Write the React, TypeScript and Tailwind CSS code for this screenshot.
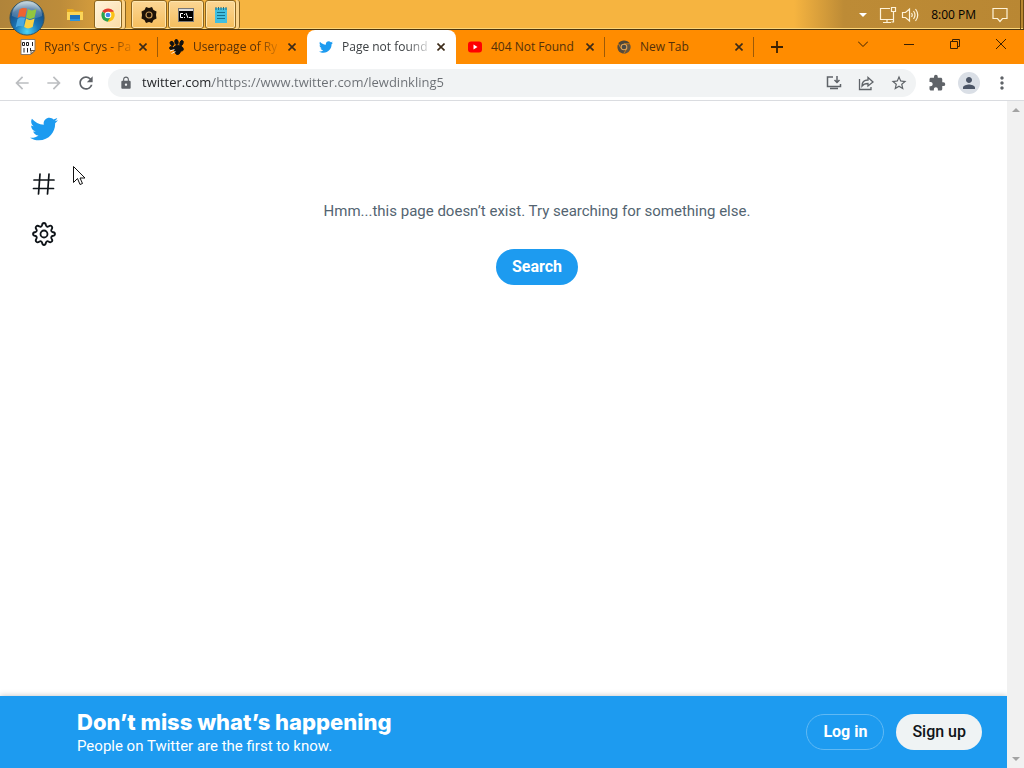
import React, { useState } from 'react';
import { FaTwitter } from 'react-icons/fa';
import { MdArrowBack, MdArrowForward, MdExtension, MdLock, MdMoreVert, MdPerson, MdRefresh, MdStarBorder } from 'react-icons/md';

interface Tab {
  title: string;
  icon: React.ReactNode;
  faded?: boolean;
}

function StartOrb() {
  return (
    <svg viewBox="0 0 38 38" className="h-9 w-9">
      <defs>
        <radialGradient id="orb" cx="50%" cy="90%" r="85%">
          <stop offset="0" stopColor="#4fd6f5" />
          <stop offset="0.4" stopColor="#1b77b8" />
          <stop offset="0.8" stopColor="#164f86" />
          <stop offset="1" stopColor="#6d98ae" />
        </radialGradient>
        <linearGradient id="gloss" x1="0" y1="0" x2="0" y2="1">
          <stop offset="0" stopColor="#fff" stopOpacity="0.6" />
          <stop offset="1" stopColor="#fff" stopOpacity="0.1" />
        </linearGradient>
      </defs>
      <circle cx="19" cy="19" r="18" fill="url(#orb)" stroke="#31505f" />
      <path d="M3 17a16 16 0 0 1 32 0c-8 4-24 4-32 0z" fill="url(#gloss)" />
      <path d="M11 10c3-2 5-2 8-1l-2 9c-3-1-5-1-8 1z" fill="#ee6330" />
      <path d="M20 9.500c3 2 5 2 9 0l-2 9c-4 2-6 2-9 0z" fill="#91c63f" />
      <path d="M9 20c3-2 5-2 8-1l-2 9c-3-1-5-1-8 1z" fill="#4aa8e2" />
      <path d="M18 19.500c3 2 5 2 9 0l-2 9c-4 2-6 2-9 0z" fill="#fbd043" />
    </svg>
  );
}

function ExplorerIcon() {
  return (
    <svg viewBox="0 0 16 16" className="h-4 w-4">
      <path d="M0 2h6l2 2h8v4H0z" fill="#e8ab22" />
      <path d="M0 5h16v8H0z" fill="#fbd558" />
      <path d="M3 8h10v6H3z" fill="#1e72bd" />
      <path d="M3 12h10v2H3z" fill="#2f95dc" />
    </svg>
  );
}

function ChromeIcon({ dark = false }: { dark?: boolean }) {
  return (
    <svg viewBox="0 0 16 16" className="h-[14px] w-[14px]">
      <path d="M8 8 1.500 4.200A7.600 7.600 0 0 1 14.600 4.300z" fill={dark ? '#4d4638' : '#e33b2e'} />
      <path d="M8 8V4.300h6.600A7.600 7.600 0 0 1 7.600 15.600z" fill={dark ? '#635541' : '#fbc116'} />
      <path d="M8 8l3.200 1.800-3.600 5.800A7.600 7.600 0 0 1 1.500 4.200z" fill={dark ? '#554b3c' : '#2aa24c'} />
      {dark && <path d="M8 4.300h6.600M11.200 9.800l-3.600 5.800M4.800 9.800 1.500 4.200" stroke="#ff8c00" strokeWidth="0.800" />}
      <circle cx="8" cy="8" r="3.800" fill={dark ? '#e0a45a' : '#fff'} />
      <circle cx="8" cy="8" r="2.700" fill={dark ? '#4b4a43' : '#4285e8'} />
    </svg>
  );
}

function CogIcon() {
  return (
    <svg viewBox="0 0 16 16" className="h-4 w-4">
      <path d="M5 0l3 1 3-1 1.500 3L15.500 4.500 15 8l.5 3.500-3 1.500L11 16l-3-1-3 1-1.500-3-3-1.500L1 8 .5 4.500l3-1.500z" fill="#1d1308" />
      <circle cx="8" cy="8" r="3" fill="none" stroke="#c99a58" strokeWidth="1.200" />
    </svg>
  );
}

function ConsoleIcon() {
  return (
    <svg viewBox="0 0 16 14" className="h-[14px] w-4">
      <path d="M0 0h16v14H0z" fill="#777" />
      <path d="M1 3h14v10H1z" fill="#000" />
      <path d="M1 1h14v2H1z" fill="#ddd" />
      <path d="M5 5.500H2.500v4H5M6.500 6v1M6.500 9v1M8 5l2 5M11 9.500h3" stroke="#fff" fill="none" />
    </svg>
  );
}

function NotepadIcon() {
  return (
    <svg viewBox="0 0 14 16" className="h-4 w-[14px]">
      <path d="M1 1h12v15H1z" fill="#41bfe0" />
      <path d="M3 5.500h8M3 8.500h8M3 11.500h8" stroke="#16718c" />
      <path d="M2 0v3M4.500 0v3M7 0v3M9.500 0v3M12 0v3" stroke="#2a6f80" />
    </svg>
  );
}

function CodeFileIcon() {
  return (
    <svg viewBox="0 0 16 16" className="h-4 w-4">
      <path d="M1 .5h14v11l-4 4H1z" fill="#fff" stroke="#8a7a66" />
      <path d="M2.500 3.500h2v3h-2zM6.500 3.500h2v3h-2zM12.500 3v4M4 9v4.500M7.500 9v4.500M10.500 9v3" fill="none" stroke="#222" />
      <path d="M11 15v-3.500h4z" fill="#ddd" stroke="#6b5a46" />
    </svg>
  );
}

function PawIcon() {
  return (
    <svg viewBox="0 0 16 16" className="h-4 w-4">
      <g fill="#111" stroke="#111" strokeWidth="0.900">
        <path d="M5 8c2-2.500 7-2.500 9 1 1 2 0 3-2 3-1 1-1 3-3 3.500S6 14 6 12c-2-1-2-3-1-4z" />
        <ellipse cx="2.500" cy="9" rx="2" ry="1.600" />
        <ellipse cx="3" cy="4.500" rx="1.700" ry="2.300" transform="rotate(-35 3 4.500)" />
        <ellipse cx="7.500" cy="3" rx="1.700" ry="2.600" transform="rotate(-10 7.500 3)" />
        <ellipse cx="12.500" cy="4" rx="1.600" ry="2.600" transform="rotate(20 12.500 4)" />
      </g>
      <path d="M1 12l4.500-1.500M2.500 14.500l4-2" stroke="#fff" strokeWidth="0.800" />
    </svg>
  );
}

function YoutubeIcon() {
  return (
    <svg viewBox="0 0 16 16" className="h-4 w-4">
      <rect x="1" y="2.500" width="14" height="11" rx="3" fill="#f00" />
      <path d="M6.500 5.500v5l4-2.500z" fill="#fff" />
    </svg>
  );
}

function CloseGlyph() {
  return (
    <svg viewBox="0 0 8 8" className="h-2 w-2">
      <path d="M.5.5l7 7M7.500.5l-7 7" stroke="currentColor" strokeWidth="1.600" />
    </svg>
  );
}

const tabs: Tab[] = [
  { title: "Ryan's Crys - Pa", icon: <CodeFileIcon />, faded: true },
  { title: 'Userpage of Ry', icon: <PawIcon />, faded: true },
  { title: 'Page not found', icon: <FaTwitter className="h-[14px] w-[14px] text-[#1d9bf0]" />, faded: true },
  { title: '404 Not Found', icon: <YoutubeIcon /> },
  { title: 'New Tab', icon: <ChromeIcon dark /> },
];

const taskButton =
  'flex h-[29px] items-center justify-center rounded-[3px] border border-[#8a6420] bg-linear-to-b from-[#fbd694] to-[#f6be5c] shadow-[inset_0_0_0_1px_#ffe6ae]';

function Taskbar() {
  return (
    <header className="relative z-10 flex h-[30px] items-center border-b border-[#4a3510] bg-[linear-gradient(to_right,#b0843a_0,#bd8c3a_60px,#f6b440_150px,#f6b440_calc(100%-230px),#bd8b36_calc(100%-180px),#b98733_100%)] shadow-[inset_0_-1px_0_#ffd677]">
      <button aria-label="Start" className="ml-[9px] h-[30px] w-9">
        <StartOrb />
      </button>
      <button aria-label="File Explorer" className="ml-[22px] flex h-[29px] w-4 items-center justify-center">
        <ExplorerIcon />
      </button>
      <button aria-label="Google Chrome" className="ml-[11px] flex h-[29px] w-7 items-center justify-center rounded-[3px] border border-[#8a6420] bg-linear-to-br from-[#fff3dc] to-[#fbdca4] shadow-[inset_0_0_0_1px_#fff3d2]">
        <ChromeIcon />
      </button>
      <span className="mr-[5px] h-[29px] w-1 rounded-r-[3px] border-r border-[#8a6420] bg-[#fbd38a]" />
      <div className="flex gap-px">
        <button aria-label="Settings" className={`${taskButton} w-9`}><CogIcon /></button>
        <button aria-label="Command Prompt" className={`${taskButton} w-9`}><ConsoleIcon /></button>
        <button aria-label="Notepad" className={`${taskButton} w-[31px]`}><NotepadIcon /></button>
      </div>
      <span className="h-[29px] w-1 rounded-r-[3px] border-r border-[#8a6420] bg-[#fbd38a]" />
      <div className="ml-auto flex h-full items-center">
        <button aria-label="Show hidden icons">
          <svg viewBox="0 0 8 4" className="h-1 w-2"><path d="M0 0h8L4 4z" fill="#fff" /></svg>
        </button>
        <svg viewBox="0 0 18 18" className="ml-3 h-[18px] w-[18px]" fill="none" stroke="#fff3d8" strokeWidth="1.200">
          <path d="M11 2.500H1.500v11h13V9M4 16.500h8M8 13.500v3M12.500 1.500h4v4h-4zM14.500 5.500V16h-2" />
        </svg>
        <svg viewBox="0 0 18 16" className="ml-1 h-4 w-[18px]" fill="none" stroke="#fff3d8" strokeWidth="1.200">
          <path d="M1.500 5.500v5h3l4 3.500V2l-4 3.500zM10.500 6q1.500 2 0 4M12.500 4q3 4 0 8M14.500 2q4.500 6 0 12" />
        </svg>
        <span className="ml-3 text-[12px]">8:00 PM</span>
        <button aria-label="Notifications" className="ml-4">
          <svg viewBox="0 0 16 16" className="h-4 w-4" fill="none" stroke="#fff3d8" strokeWidth="1.200">
            <path d="M1 1.500h14v10h-4.500L8 14.500l-2.500-3H1z" />
          </svg>
        </button>
        <span className="ml-3 h-full w-1 border-x border-[#6b4a12]" />
      </div>
    </header>
  );
}

function TabStrip({ active, onSelect }: { active: number; onSelect: (index: number) => void }) {
  return (
    <div className="flex h-[34px] bg-[#ff8c00] pl-[9px] text-[#54300a]">
      {tabs.map((tab, index) => (
        <div
          key={tab.title}
          className={`relative flex w-[149px] items-center pl-[11px] ${index === active ? 'rounded-t-lg bg-white text-[#3c4043]' : ''}`}
        >
          <button onClick={() => onSelect(index)} className="flex items-center gap-2 text-left">
            <span className="flex w-4 shrink-0 justify-center">{tab.icon}</span>
            <span className="w-[88px]">
              <span
                className={`block w-fit text-[12px] whitespace-nowrap ${tab.faded ? '[mask-image:linear-gradient(to_right,black_75%,rgba(0,0,0,0.2))]' : ''}`}
              >
                {tab.title}
              </span>
            </span>
          </button>
          <button aria-label="Close tab" className="ml-[3px] flex h-4 w-4 items-center justify-center text-[#3b2a18]">
            <CloseGlyph />
          </button>
          {index !== active && index !== active - 1 && <span className="absolute right-0 h-5 w-px bg-[#9c5a08]" />}
        </div>
      ))}
      <button aria-label="New tab" className="flex w-[46px] items-center justify-center">
        <svg viewBox="0 0 12 12" className="h-3 w-3"><path d="M6 0v12M0 6h12" stroke="#3a2003" strokeWidth="1.800" /></svg>
      </button>
      <div className="ml-auto flex">
        <button aria-label="Search tabs" className="flex h-7 w-[46px] items-center justify-center">
          <svg viewBox="0 0 10 6" className="h-[6px] w-[10px]"><path d="M0 .5l5 5 5-5" fill="none" stroke="#3a2003" /></svg>
        </button>
        <button aria-label="Minimize" className="flex h-7 w-[46px] items-center justify-center">
          <svg viewBox="0 0 10 10" className="h-[10px] w-[10px]"><path d="M0 5.500h10" stroke="#3a2003" /></svg>
        </button>
        <button aria-label="Restore" className="flex h-7 w-[46px] items-center justify-center">
          <svg viewBox="0 0 10 10" className="h-[10px] w-[10px]"><path d="M.5 2.500h7v7h-7zM2.500 2.500v-2h7v7h-2" fill="none" stroke="#3a2003" /></svg>
        </button>
        <button aria-label="Close" className="flex h-7 w-[46px] items-center justify-center">
          <svg viewBox="0 0 10 10" className="h-[10px] w-[10px]"><path d="M0 0l10 10M10 0L0 10" stroke="#3a2003" /></svg>
        </button>
      </div>
    </div>
  );
}

function Toolbar() {
  const [url, setUrl] = useState('twitter.com/https://www.twitter.com/lewdinkling5');

  return (
    <div className="flex h-[37px] items-center border-b border-[#dadce0] bg-white px-3 pt-px text-[#5f6368]">
      <div className="flex gap-3">
        <button aria-label="Back"><MdArrowBack className="h-5 w-5 text-[#bcbec1]" /></button>
        <button aria-label="Forward"><MdArrowForward className="h-5 w-5 text-[#bcbec1]" /></button>
        <button aria-label="Reload"><MdRefresh className="h-5 w-5" /></button>
      </div>
      <div className="ml-3 flex h-7 flex-1 items-center rounded-full bg-[#f1f3f4] pr-2 pl-[11px]">
        <MdLock className="h-[14px] w-[14px] shrink-0" />
        <input
          aria-label="Address"
          value={url}
          onChange={(e) => setUrl(e.target.value)}
          className="ml-[9px] min-w-0 flex-1 bg-linear-to-r from-[#202124] from-[70px] to-[#6a6e73] to-[70px] bg-clip-text text-[13px] text-transparent outline-none"
        />
        <div className="flex items-center gap-4">
          <button aria-label="Install">
            <svg viewBox="0 0 16 16" className="h-4 w-4" fill="none" stroke="currentColor" strokeWidth="1.500">
              <path d="M7 2H1.500v9.500h13V9M11 1v6M8.500 5L11 7.500 13.500 5M4 13.500h8" />
            </svg>
          </button>
          <button aria-label="Share">
            <svg viewBox="0 0 16 16" className="h-4 w-4" fill="none" stroke="currentColor" strokeWidth="1.300">
              <path d="M1.500 4v10.500H13V12M4 11c0-4 2-6 6-6V2.500L15 7l-5 4V8.500c-3 0-4.500.5-6 2.500z" />
            </svg>
          </button>
          <button aria-label="Bookmark"><MdStarBorder className="h-[18px] w-[18px]" /></button>
        </div>
      </div>
      <div className="ml-3 flex items-center gap-3">
        <button aria-label="Extensions"><MdExtension className="h-[18px] w-[18px]" /></button>
        <button aria-label="Profile" className="flex h-[22px] w-[22px] items-center justify-center rounded-full bg-[#dadfe6]">
          <MdPerson className="h-[18px] w-[18px] text-[#4b5566]" />
        </button>
        <button aria-label="Menu"><MdMoreVert className="h-5 w-5" /></button>
      </div>
    </div>
  );
}

function SideNav() {
  return (
    <nav className="flex w-[87px] shrink-0 flex-col items-center gap-6 pt-[14px] text-[#0f1419]">
      <a href="#home" aria-label="Twitter">
        <FaTwitter className="h-7 w-7 text-[#1d9bf0]" />
      </a>
      <a href="#explore" aria-label="Explore" className="mt-1">
        <svg viewBox="0 0 26 26" className="h-[26px] w-[26px]" fill="none" stroke="currentColor" strokeWidth="1.700" strokeLinecap="round">
          <path d="M9 3L7.500 23M18 3l-1.500 20M3 9h20M2.500 17.500h20" />
        </svg>
      </a>
      <a href="#settings" aria-label="Settings">
        <svg viewBox="0 0 26 26" className="h-[26px] w-[26px]" fill="none" stroke="currentColor" strokeWidth="1.800" strokeLinejoin="round">
          <path d="M11 4.500Q11.300 2 13 2t2 2.500q.3.800 1 1.100t1.500-.1q2-1.500 3.200-.2t-.2 3.200q-.5.700-.2 1.500t1.200 1q2.500.3 2.500 2t-2.500 2q-.9.200-1.200 1t.2 1.500q1.500 2 .2 3.200t-3.200-.2q-.8-.5-1.500-.2t-1 1.100Q14.700 24 13 24t-2-2.600q-.3-.800-1-1.100t-1.500.2q-2 1.500-3.200.2t.2-3.200q.5-.700.2-1.500t-1.200-1Q2 14.700 2 13t2.500-2q.9-.2 1.200-1t-.2-1.500q-1.500-2-.2-3.200t3.200.2q.8.400 1.500.1t1-1.100z" />
          <circle cx="13" cy="13" r="3.500" />
        </svg>
      </a>
    </nav>
  );
}

function SignupBar() {
  return (
    <footer className="flex h-[72px] shrink-0 items-center justify-between bg-[#1d9bf0] pr-[25px] pl-[77px] font-[Roboto,sans-serif] text-white shadow-[0_0_6px_rgba(0,0,0,0.25)]">
      <div>
        <h2 className="font-['Inter',sans-serif] text-[22px] leading-7 font-extrabold">Don’t miss what’s happening</h2>
        <p className="text-[15px] leading-5">People on Twitter are the first to know.</p>
      </div>
      <div className="flex gap-3 text-[16px]">
        <button className="h-9 rounded-full border border-[#60b9f4] px-4 font-bold">Log in</button>
        <button className="h-9 rounded-full bg-[#eff3f4] px-4 font-medium text-[#0f1419]">Sign up</button>
      </div>
    </footer>
  );
}

function Scrollbar() {
  return (
    <div className="flex w-[17px] shrink-0 flex-col items-center justify-between bg-[#f1f1f1] py-[7px]">
      <svg viewBox="0 0 8 4" className="h-1 w-2"><path d="M0 4h8L4 0z" fill="#a3a3a3" /></svg>
      <svg viewBox="0 0 8 4" className="h-1 w-2"><path d="M0 0h8L4 4z" fill="#a3a3a3" /></svg>
    </div>
  );
}

export default function App() {
  const [active, setActive] = useState(2);

  return (
    <div className="flex h-screen flex-col overflow-hidden bg-white font-['Open_Sans',sans-serif]">
      <Taskbar />
      <TabStrip active={active} onSelect={setActive} />
      <Toolbar />
      <div className="flex min-h-0 flex-1">
        <div className="flex min-w-0 flex-1 flex-col">
          <div className="flex flex-1">
            <SideNav />
            <main className="flex flex-1 flex-col items-center pt-[100px] pr-5 font-[Roboto,sans-serif]">
              <p className="text-[15px] leading-5 text-[#536471]">Hmm...this page doesn’t exist. Try searching for something else.</p>
              <button className="mt-7 h-9 rounded-full bg-[#1d9bf0] px-4 text-[16px] font-bold text-white">Search</button>
            </main>
          </div>
          <SignupBar />
        </div>
        <Scrollbar />
      </div>
      {/* Mouse pointer */}
      <svg viewBox="0 0 13 20" className="pointer-events-none absolute top-[166px] left-[73px] h-5 w-[13px]">
        <path d="M.5.5v16l4-4 2.500 6 2.500-1-2.500-5.500h5z" fill="#fff" stroke="#111" />
      </svg>
    </div>
  );
}
